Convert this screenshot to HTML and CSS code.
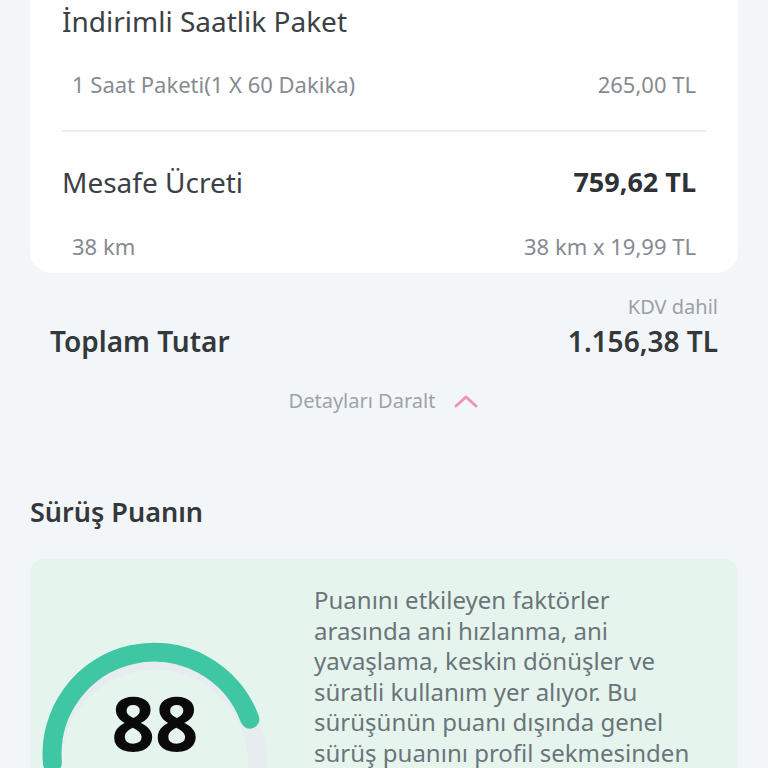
FILE: index.html
```html
<!DOCTYPE html>
<html lang="tr">
<head>
  <meta charset="UTF-8" />
  <title>Sürüş Özeti</title>
  <link rel="stylesheet" href="styles.css">
</head>
<body>
<div class="page">
  <div class="card">
    <div class="group">
      <div class="line-title">İndirimli Saatlik Paket</div>
      <div class="line-sub">
        <span>1 Saat Paketi(1 X 60 Dakika)</span>
        <span>265,00 TL</span>
      </div>
    </div>
    <div class="divider"></div>
    <div class="group second">
      <div class="line-title">
        <span>Mesafe Ücreti</span>
        <span class="amount">759,62 TL</span>
      </div>
      <div class="line-sub">
        <span>38 km</span>
        <span>38 km x 19,99 TL</span>
      </div>
    </div>
  </div>

  <div class="total">
    <div class="kdv">KDV dahil</div>
    <div class="total-row">
      <span>Toplam Tutar</span>
      <span>1.156,38 TL</span>
    </div>
  </div>

  <div class="collapse">
    <span>Detayları Daralt</span>
    <svg width="26" height="16" viewBox="0 0 26 16">
      <path d="M3 13 L13 4 L23 13" fill="none" stroke="#ec97a8" stroke-width="3" stroke-linecap="round" stroke-linejoin="round"/>
    </svg>
  </div>

  <h2 class="section-title">Sürüş Puanın</h2>

  <div class="score-card">
    <div class="gauge">
      <svg width="226" height="200" viewBox="0 0 226 200">
        <!-- track -->
        <path d="M 10.4 120.9 A 102 102 0 1 1 215.6 120.9" fill="none" stroke="#e7ecef" stroke-width="19" stroke-linecap="round"/>
        <!-- value -->
        <path d="M 10.4 120.9 A 102 102 0 0 1 207.8 77.1" fill="none" stroke="#3fc6a2" stroke-width="19" stroke-linecap="round"/>
      </svg>
      <div class="score">88</div>
    </div>
    <p class="score-text">Puanını etkileyen faktörler arasında ani hızlanma, ani yavaşlama, keskin dönüşler ve süratli kullanım yer alıyor. Bu sürüşünün puanı dışında genel sürüş puanını profil sekmesinden görebilirsin.</p>
  </div>
</div>
</body>
</html>
```

FILE: styles.css
```css
body {
  margin: 0;
  background: #f3f6f8;
  font-family: 'Noto Sans', 'Open Sans', sans-serif;
  color: #3a3f44;
}
.page {
  padding: 0 30px;
  height: 768px;
  overflow: hidden;
}
.card {
  background: white;
  border-radius: 22px;
  margin-top: -30px;
  padding: 30px 32px 7px 32px;
}
.group {
  padding-right: 10px;
}
.line-title {
  display: flex;
  justify-content: space-between;
  align-items: center;
  font-size: 28px;
  line-height: 42px;
  height: 42px;
  color: #3b4045;
}
.amount {
  font-weight: bold;
  font-size: 27px;
  color: #2e3236;
}
.line-sub {
  display: flex;
  justify-content: space-between;
  align-items: center;
  font-size: 22px;
  line-height: 40px;
  color: #858b90;
  padding-left: 10px;
  margin-top: 22px;
  height: 40px;
}
.second .line-sub {
  margin-top: 23px;
}
.divider {
  height: 2px;
  background: #e9edef;
  margin: 26px 0 29px 0;
}
.total {
  padding: 20px 20px 0 20px;
}
.kdv {
  text-align: right;
  font-size: 20px;
  line-height: 28px;
  color: #9aa1a6;
  height: 28px;
}
.total-row {
  display: flex;
  justify-content: space-between;
  align-items: center;
  font-size: 28px;
  line-height: 40px;
  font-weight: 600;
  color: #33383c;
  height: 40px;
}
.collapse {
  display: flex;
  justify-content: center;
  align-items: center;
  gap: 18px;
  margin-top: 27px;
  font-size: 20px;
  line-height: 26px;
  color: #9ca4a9;
  height: 26px;
}
.section-title {
  margin: 83px 0 0 0;
  font-size: 27px;
  line-height: 30px;
  font-weight: 600;
  color: #33383c;
  height: 30px;
}
.score-card {
  background: #e5f5ee;
  border-radius: 14px;
  margin-top: 32px;
  display: flex;
  padding: 26px 20px 0 12px;
}
.gauge {
  position: relative;
  width: 226px;
  flex-shrink: 0;
}
.gauge svg {
  display: block;
  margin-top: 57px;
}
.score {
  position: absolute;
  left: 0;
  right: 0;
  top: 99px;
  text-align: center;
  font-size: 76px;
  font-weight: bold;
  color: #0a0a0a;
  line-height: 1;
}
.score-text {
  margin: 0 0 0 46px;
  width: 386px;
  font-size: 24px;
  line-height: 30.5px;
  color: #6b7479;
}
```
